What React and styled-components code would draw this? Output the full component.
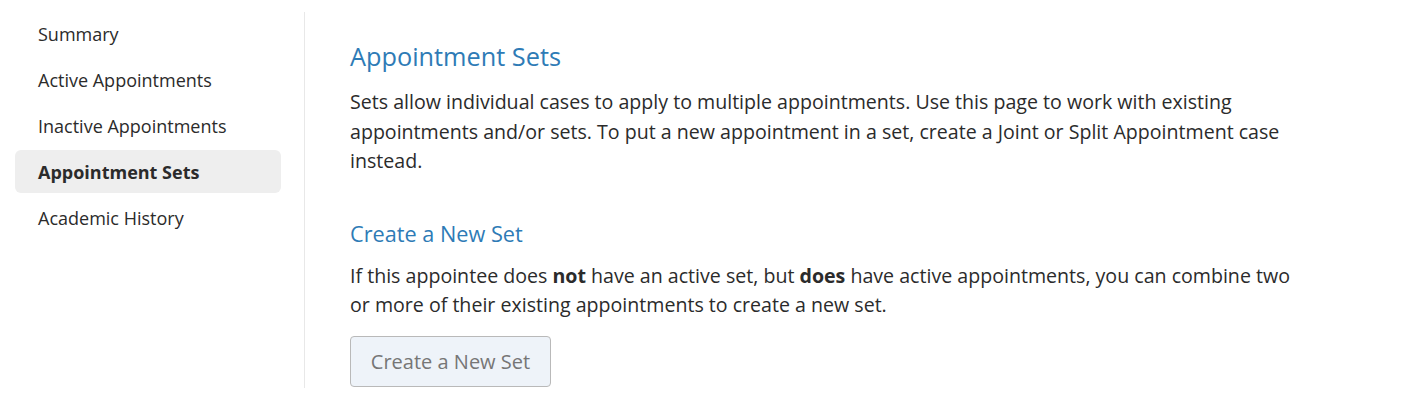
import React from "react";
import styled, { createGlobalStyle } from "styled-components";

const GlobalStyle = createGlobalStyle`
  body {
    margin: 0;
    background: #ffffff;
    font-family: "Open Sans", "Liberation Sans", sans-serif;
    color: #333333;
  }
`;

const Page = styled.div`
  display: flex;
  align-items: flex-start;
  min-height: 401px;
`;

const Sidebar = styled.nav`
  width: 305px;
  flex-shrink: 0;
  box-sizing: border-box;
  margin-top: 12px;
  padding: 0 23px 0 15px;
  height: 376px;
  border-right: 1px solid #e8e8e8;
  display: flex;
  flex-direction: column;
  gap: 3px;
`;

const NavItem = styled.a`
  display: flex;
  align-items: center;
  height: 43px;
  padding-left: 23px;
  border-radius: 6px;
  font-size: 18px;
  color: #2b2b2b;
  text-decoration: none;
  font-weight: ${(p) => (p.$active ? 700 : 400)};
  background: ${(p) => (p.$active ? "#eeeeee" : "transparent")};
  cursor: pointer;
`;

const Main = styled.main`
  flex: 1;
  padding: 38px 45px 0 45px;
  max-width: 952px;
`;

const Heading = styled.h2`
  margin: 0;
  font-size: 25.3px;
  font-weight: 400;
  line-height: 36px;
  color: #2e7bb6;
`;

const SubHeading = styled.h3`
  margin: 0;
  font-size: 21.7px;
  font-weight: 400;
  line-height: 30px;
  color: #2e7bb6;
`;

const Text = styled.p`
  margin: ${(p) => p.$margin || "0"};
  font-size: 19.6px;
  line-height: 29.5px;
  color: #2b2b2b;

  strong {
    font-weight: 700;
  }
`;

const Section = styled.section`
  margin-top: ${(p) => p.$top || "0"};
`;

const Button = styled.button`
  margin-top: 16px;
  height: 51px;
  width: 201px;
  padding: 0;
  font-family: inherit;
  font-size: 20px;
  color: #767676;
  background: #eef3f9;
  border: 1px solid #b9b9b9;
  border-radius: 4px;
  cursor: default;
`;

const navItems = [
  "Summary",
  "Active Appointments",
  "Inactive Appointments",
  "Appointment Sets",
  "Academic History",
];

export default function App() {
  return (
    <>
      <GlobalStyle />
      <Page>
        <Sidebar>
          {navItems.map((item) => (
            <NavItem key={item} $active={item === "Appointment Sets"}>
              {item}
            </NavItem>
          ))}
        </Sidebar>
        <Main>
          <Section>
            <Heading>Appointment Sets</Heading>
            <Text $margin="13px 0 0">
              Sets allow individual cases to apply to multiple appointments. Use
              this page to work with existing appointments and/or sets. To put a
              new appointment in a set, create a Joint or Split Appointment case
              instead.
            </Text>
          </Section>
          <Section $top="43px">
            <SubHeading>Create a New Set</SubHeading>
            <Text $margin="12px 0 0">
              If this appointee does <strong>not</strong> have an active set, but{" "}
              <strong>does</strong> have active appointments, you can combine two
              or more of their existing appointments to create a new set.
            </Text>
            <Button>Create a New Set</Button>
          </Section>
        </Main>
      </Page>
    </>
  );
}
